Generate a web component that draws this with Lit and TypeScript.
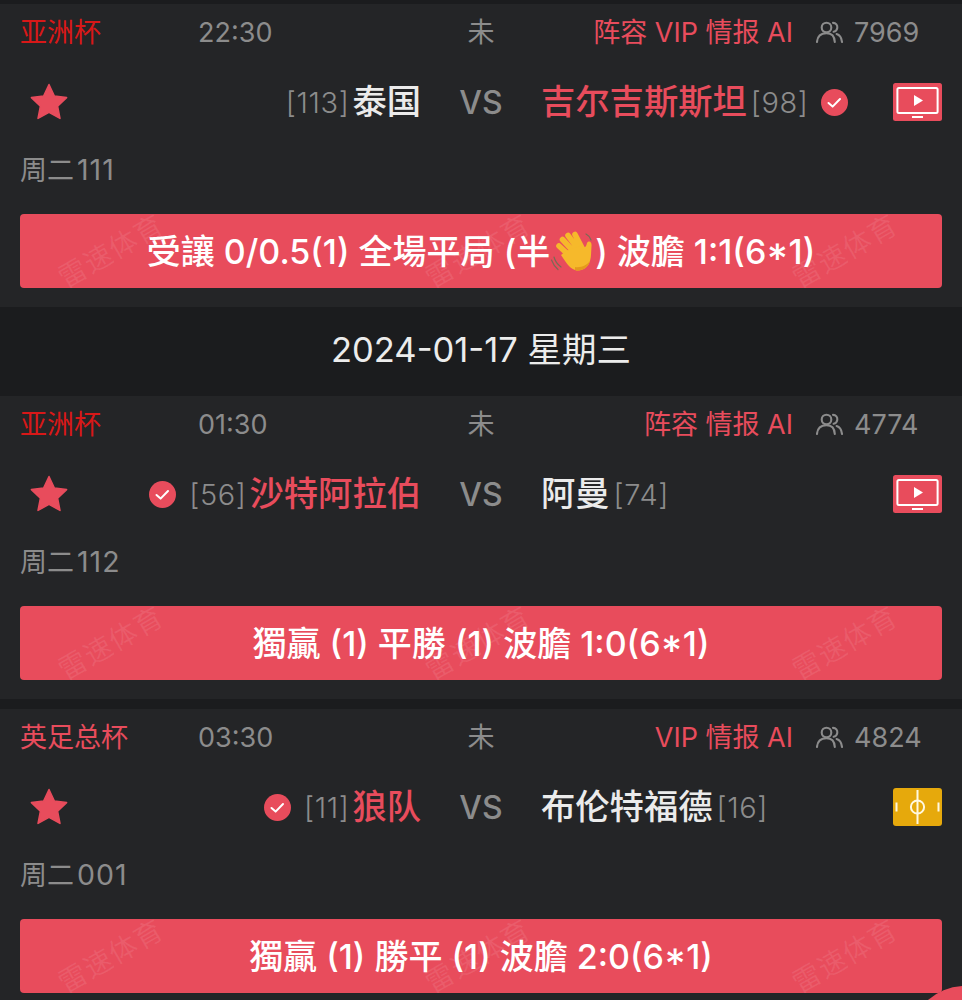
import { LitElement, html, css, svg } from 'lit'
import { customElement } from 'lit/decorators.js'

type Match = {
  league: string
  leagueColor?: string
  time: string
  tags: string
  count: string
  home: string
  homeRank: string
  away: string
  awayRank: string
  pick: 'home' | 'away'
  homeRed: boolean
  awayRed: boolean
  code: string
  icon: 'tv' | 'pitch'
  bet: unknown
}

const star = html`<svg class="star" viewBox="0 0 38 38">
  <path
    d="M19 1.5 L24.4 13 L36.6 14.6 L27.6 23.2 L30 35.4 L19 29.4 L8 35.4 L10.4 23.2 L1.4 14.6 L13.6 13 Z"
    fill="#e84c5c"
    stroke="#e84c5c"
    stroke-width="1.5"
    stroke-linejoin="round"
  />
</svg>`

const check = html`<svg class="check" viewBox="0 0 27 27">
  <circle cx="13.5" cy="13.5" r="13.5" fill="#e84c5c" />
  <path d="M7.5 14 L11.6 17.6 L19 10" fill="none" stroke="#fff" stroke-width="2" stroke-linecap="round" stroke-linejoin="round" />
</svg>`

const users = html`<svg class="users" viewBox="0 0 27 22" fill="none" stroke="#8c8c8c" stroke-width="2.1" stroke-linecap="round">
  <circle cx="10.5" cy="6.5" r="4.8" />
  <path d="M1 21 C1.4 15 5 12.2 10.5 12.2 C13 12.2 15 12.8 16.5 14.2 C18 15.8 18.6 18 18.8 21" />
  <path d="M17 1.9 C20 2 21.6 4.2 21.3 6.8 C21 8.8 19.6 10.4 17.6 10.8" />
  <path d="M20.6 13 C24 14 25.6 17 26 21" />
</svg>`

const tv = html`<svg class="badge" viewBox="0 0 49 38">
  <rect width="49" height="38" rx="2.5" fill="#e84c5c" />
  <rect x="4.4" y="5" width="40.2" height="25" rx="1.5" fill="none" stroke="#fff" stroke-width="2" />
  <path d="M21 12 L30 17.5 L21 23 Z" fill="#fff" />
  <rect x="19" y="33" width="11" height="2" fill="#fff" />
</svg>`

const pitch = html`<svg class="badge" viewBox="0 0 49 38">
  <rect width="49" height="38" rx="3" fill="#e6a90c" />
  <path d="M24.5 2 V36" stroke="#fff8e0" stroke-width="2" />
  <circle cx="24.5" cy="19" r="6.6" fill="none" stroke="#fff8e0" stroke-width="2" />
  <path d="M3.5 14.5 V23.5 M45.5 14.5 V23.5" stroke="#fff8e0" stroke-width="2" />
</svg>`

// waving hand drawn by hand, no emoji font in the sandbox
const wave = html`<svg class="wave" viewBox="0 0 45 42">
  ${svg`
    <g fill="none" stroke-linecap="round">
      <path d="M4 26 C5 30 7 33 11 36 M1.5 29 C3 33 5 36 8 38.5" stroke="#7a6a55" stroke-width="1.2" />
      <path d="M36 3 C38 4 40 6 41 9" stroke="#7a6a55" stroke-width="1.2" />
      <path d="M9 15 L21 26 M12.5 8.5 L25 22 M18 4.5 L29 19 M25 3.5 L32 17" stroke="#f6b92b" stroke-width="5.6" />
    </g>
    <path d="M16 20 L32 14 C35 18 36 16 37 12 C39 9 42 11 41.5 15 C41 20 41.5 25 40 30 C38 37 31 41 25 39 C19 37 15 30 11 24 Z" fill="#f6b92b" />
    <path d="M25 39 C31 41 38 37 40 30 C37 34 31 37 25 36 Z" fill="#e49a1c" />
  `}
</svg>`

const matches: Match[] = [
  {
    league: '亚洲杯',
    time: '22:30',
    tags: '阵容 VIP 情报 AI',
    count: '7969',
    home: '泰国',
    homeRank: '[113]',
    away: '吉尔吉斯斯坦',
    awayRank: '[98]',
    pick: 'away',
    homeRed: false,
    awayRed: true,
    code: '周二111',
    icon: 'tv',
    bet: html`受讓 0/0.5(1) 全場平局 (半${wave}) 波膽 1:1(6*1)`,
  },
  {
    league: '亚洲杯',
    time: '01:30',
    tags: '阵容 情报 AI',
    count: '4774',
    home: '沙特阿拉伯',
    homeRank: '[56]',
    away: '阿曼',
    awayRank: '[74]',
    pick: 'home',
    homeRed: true,
    awayRed: false,
    code: '周二112',
    icon: 'tv',
    bet: '獨贏 (1) 平勝 (1) 波膽 1:0(6*1)',
  },
  {
    league: '英足总杯',
    leagueColor: '#e84c5c',
    time: '03:30',
    tags: 'VIP 情报 AI',
    count: '4824',
    home: '狼队',
    homeRank: '[11]',
    away: '布伦特福德',
    awayRank: '[16]',
    pick: 'home',
    homeRed: true,
    awayRed: false,
    code: '周二001',
    icon: 'pitch',
    bet: '獨贏 (1) 勝平 (1) 波膽 2:0(6*1)',
  },
]

@customElement('app-root')
export class AppRoot extends LitElement {
  static styles = css`
    :host {
      display: block;
      position: relative;
      height: 1000px;
      overflow: hidden;
      background: #1b1c1e;
      font-family: 'Inter', 'Noto Sans CJK SC', sans-serif;
      padding-top: 4px;
      box-sizing: border-box;
    }

    .card {
      background: #242527;
      height: 303px;
      padding: 0 20px;
      box-sizing: border-box;
    }

    .card + .card {
      margin-top: 10px;
    }

    .info {
      display: grid;
      grid-template-columns: 1fr 60px 1fr;
      align-items: center;
      height: 56px;
      font-size: 27px;
      color: #8c8c8c;
    }

    .left,
    .right {
      display: flex;
      align-items: center;
    }

    .league {
      width: 178px;
      margin-bottom: 4px;
      color: #d81818;
      white-space: nowrap;
    }

    .status {
      margin-bottom: 4px;
      text-align: center;
    }

    .right {
      justify-content: flex-end;
    }

    .tags {
      margin-bottom: 4px;
      color: #e84c5c;
      white-space: nowrap;
    }

    .users {
      width: 27px;
      height: 22px;
      margin-left: 23px;
      flex: none;
    }

    .count {
      width: 88px;
      margin-left: 11px;
      flex: none;
      font-size: 27px;
    }

    .teams {
      display: grid;
      grid-template-columns: 1fr 120px 1fr;
      align-items: center;
      height: 84px;
    }

    .side {
      display: flex;
      align-items: center;
      white-space: nowrap;
    }

    .star {
      width: 38px;
      height: 38px;
      margin-left: 10px;
      margin-right: auto;
      flex: none;
    }

    .name {
      font-size: 34.3px;
      font-weight: 500;
      color: #ebebeb;
      line-height: 44px;
    }

    .name.red {
      color: #e84c5c;
    }

    .rank {
      font-size: 29px;
      font-weight: 300;
      letter-spacing: 0.6px;
      color: #8c8c8c;
    }

    .home .rank {
      margin-right: 3px;
    }

    .away .rank {
      margin-left: 4px;
    }

    .check {
      width: 27px;
      height: 27px;
      flex: none;
    }

    .home .check {
      margin-right: 13px;
    }

    .away .check {
      margin-left: 12px;
    }

    .badge {
      width: 49px;
      height: 38px;
      margin-left: auto;
      flex: none;
    }

    .vs {
      text-align: center;
      font-size: 32px;
      font-weight: 500;
      color: #8c8c8c;
    }

    .code {
      height: 52px;
      line-height: 52px;
      font-size: 27px;
      color: #8c8c8c;
    }

    .code .num {
      font-size: 28.5px;
      letter-spacing: 1px;
      margin-left: 3px;
    }

    .bet {
      position: relative;
      display: flex;
      align-items: center;
      justify-content: center;
      height: 74px;
      margin-top: 18px;
      padding-bottom: 4px;
      box-sizing: border-box;
      border-radius: 4px;
      background: #e84c5c;
      color: #fff;
      font-size: 34px;
      font-weight: 500;
      white-space: nowrap;
    }

    .wave {
      width: 45px;
      height: 42px;
      vertical-align: -9px;
    }

    .mark {
      position: absolute;
      top: 23px;
      font-size: 28px;
      font-weight: 400;
      line-height: 1;
      letter-spacing: 1px;
      color: rgba(255, 255, 255, 0.09);
      transform: rotate(-30deg);
    }

    .date {
      height: 89px;
      line-height: 86px;
      text-align: center;
      font-size: 34.5px;
      color: #ececec;
    }

    .bubble {
      position: absolute;
      left: 909px;
      top: 986px;
      width: 112px;
      height: 112px;
      border-radius: 50%;
      background: #e84c5c;
    }
  `

  private renderCard(m: Match) {
    return html`
      <div class="card">
        <div class="info">
          <div class="left">
            <span class="league" style=${m.leagueColor ? `color:${m.leagueColor}` : ''}>${m.league}</span>
            <span>${m.time}</span>
          </div>
          <div class="status">未</div>
          <div class="right">
            <span class="tags">${m.tags}</span>
            ${users}
            <span class="count">${m.count}</span>
          </div>
        </div>
        <div class="teams">
          <div class="side home">
            ${star} ${m.pick === 'home' ? check : ''}
            <span class="rank">${m.homeRank}</span>
            <span class="name ${m.homeRed ? 'red' : ''}">${m.home}</span>
          </div>
          <div class="vs">VS</div>
          <div class="side away">
            <span class="name ${m.awayRed ? 'red' : ''}">${m.away}</span>
            <span class="rank">${m.awayRank}</span>
            ${m.pick === 'away' ? check : ''} ${m.icon === 'tv' ? tv : pitch}
          </div>
        </div>
        <div class="code">${m.code.slice(0, 2)}<span class="num">${m.code.slice(2)}</span></div>
        <div class="bet">
          <span class="mark" style="left:33px">雷速体育</span>
          <span class="mark" style="left:400px">雷速体育</span>
          <span class="mark" style="left:767px">雷速体育</span>
          <span>${m.bet}</span>
        </div>
      </div>
    `
  }

  render() {
    return html`
      ${this.renderCard(matches[0])}
      <div class="date">2024-01-17 星期三</div>
      ${this.renderCard(matches[1])} ${this.renderCard(matches[2])}
      <div class="bubble"></div>
    `
  }
}
